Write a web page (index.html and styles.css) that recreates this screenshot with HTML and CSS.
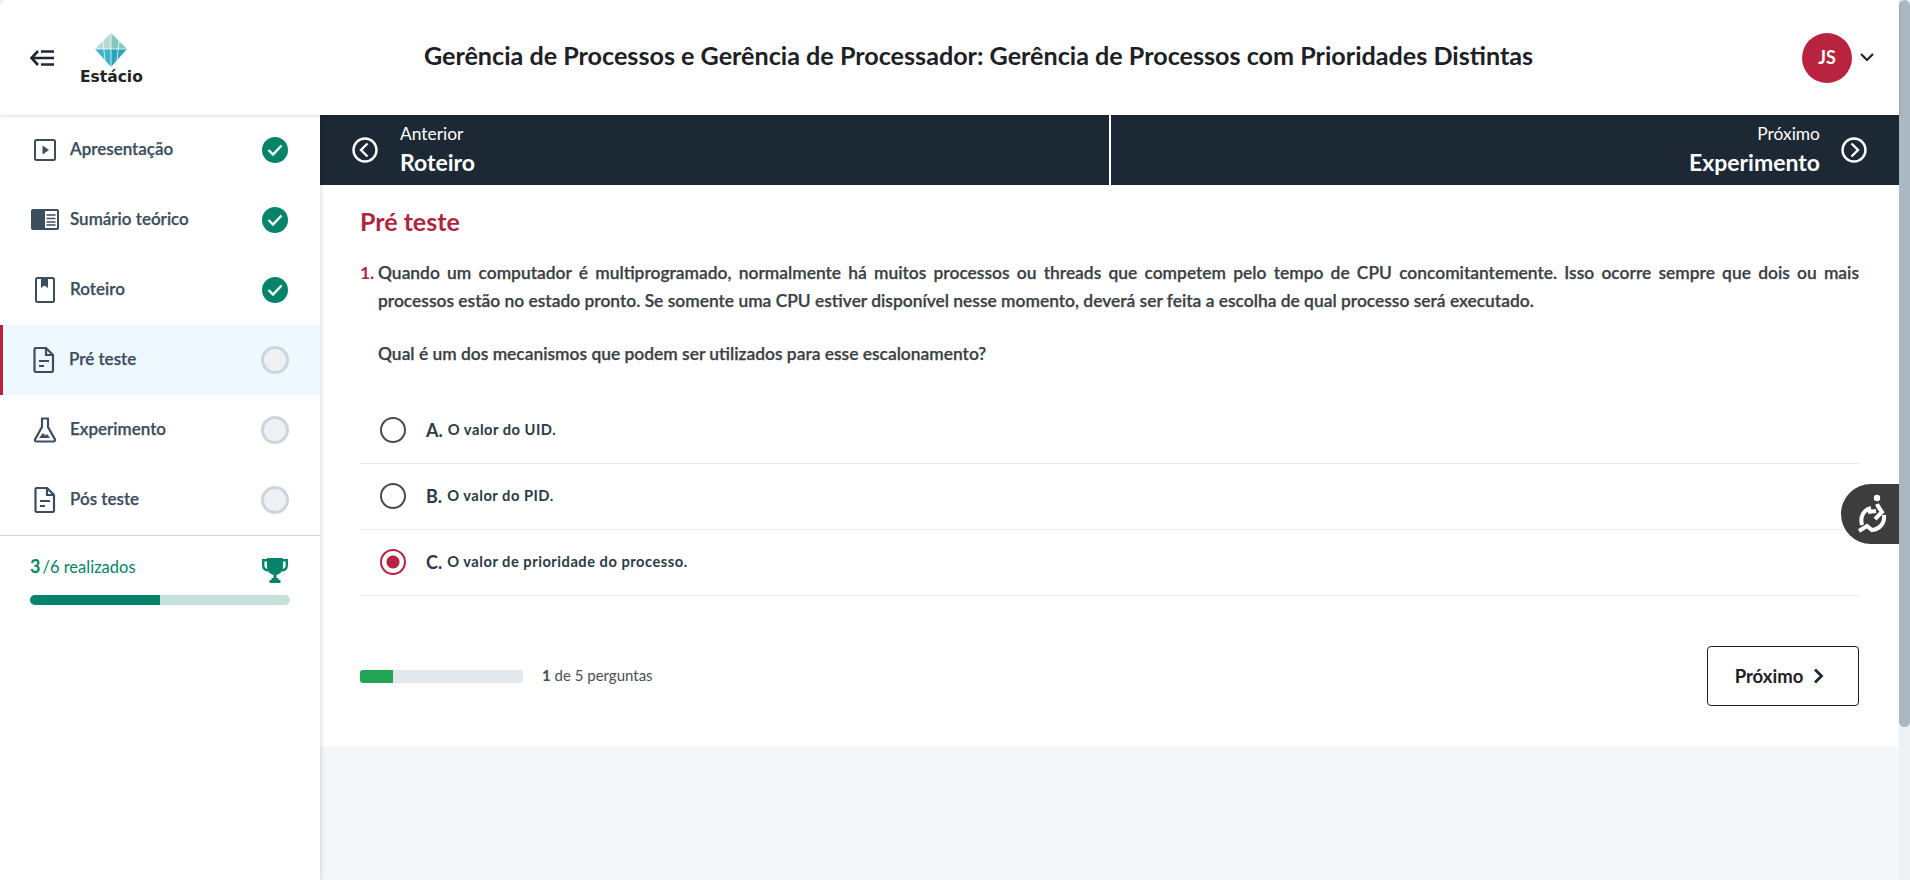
FILE: index.html
```html
<!DOCTYPE html>
<html lang="pt-BR">

<head>
    <meta charset="UTF-8">
    <meta name="viewport" content="width=device-width, initial-scale=1.0">
    <title>Pré teste</title>
    <link rel="stylesheet" href="styles.css">
</head>

<body>
    <div class="app">
        <div class="page">
            <header class="header">
                <div class="header-left">
                    <svg class="menu-back" width="26" height="18" viewBox="0 0 26 18" fill="none" stroke="#1c2833" stroke-width="2.600">
                        <path d="M9 2 2.500 9 9 16M3 9h22M12 2.500h13M12 15.500h13" />
                    </svg>
                    <div class="logo">
                        <svg width="36" height="36" viewBox="0 0 36 36">
                            <path d="M18 1v16H2z" fill="#b5dcd2" />
                            <path d="M18 1v16h16z" fill="#82c7ba" />
                            <path d="M2 17h16v18z" fill="#3ab4ca" />
                            <path d="M34 17H18v18z" fill="#2ba3bb" />
                            <path d="M18 1v34M2 17h32M10 9l2 20M26 9l-2 20" stroke="#fff" stroke-width="1" fill="none" opacity=".75" />
                        </svg>
                        <span class="logo-name">Estácio</span>
                    </div>
                </div>
                <h1 class="course-title">Gerência de Processos e Gerência de Processador: Gerência de Processos com Prioridades Distintas</h1>
                <div class="user">
                    <span class="avatar">JS</span>
                    <svg width="14" height="9" viewBox="0 0 14 9" fill="none" stroke="#1c2833" stroke-width="2.200">
                        <path d="M1 1l6 6 6-6" />
                    </svg>
                </div>
            </header>

            <div class="body-row">
                <aside class="sidebar">
                    <ul class="steps">
                        <li class="step">
                            <svg class="step-icon" width="24" height="24" viewBox="0 0 24 24" fill="none" stroke="#3c4d5c" stroke-width="2">
                                <rect x="2" y="2" width="20" height="20" rx="1.500" />
                                <path d="M9.500 7.500v9l6.500-4.500z" fill="#3c4d5c" stroke="none" />
                            </svg>
                            <span class="step-name">Apresentação</span>
                            <span class="status done"><svg width="16" height="12" viewBox="0 0 16 12" fill="none" stroke="#fff" stroke-width="2.400"><path d="M1.500 6l4.500 4.500 8.500-9" /></svg></span>
                        </li>
                        <li class="step">
                            <svg class="step-icon wide" width="28" height="22" viewBox="0 0 28 22">
                                <rect x="0" y="0" width="28" height="21" rx="2" fill="#3c4d5c" />
                                <rect x="14" y="2" width="12" height="17" fill="#fff" />
                                <path d="M15.500 6h9M15.500 9.500h9M15.500 13h9M15.500 16h9" stroke="#3c4d5c" stroke-width="1.300" />
                            </svg>
                            <span class="step-name">Sumário teórico</span>
                            <span class="status done"><svg width="16" height="12" viewBox="0 0 16 12" fill="none" stroke="#fff" stroke-width="2.400"><path d="M1.500 6l4.500 4.500 8.500-9" /></svg></span>
                        </li>
                        <li class="step">
                            <svg class="step-icon" width="24" height="26" viewBox="0 0 24 26" fill="none" stroke="#3c4d5c" stroke-width="2">
                                <rect x="3" y="1" width="18" height="24" rx="1.500" />
                                <path d="M8 1h7v10l-3.500-2.500L8 11z" fill="#3c4d5c" stroke="none" />
                            </svg>
                            <span class="step-name">Roteiro</span>
                            <span class="status done"><svg width="16" height="12" viewBox="0 0 16 12" fill="none" stroke="#fff" stroke-width="2.400"><path d="M1.500 6l4.500 4.500 8.500-9" /></svg></span>
                        </li>
                        <li class="step active">
                            <svg class="step-icon" width="24" height="26" viewBox="0 0 24 26" fill="none" stroke="#3c4d5c" stroke-width="2.200">
                                <path d="M4 1h10l7 7v15.500a1.500 1.500 0 0 1-1.500 1.500h-15.500a1.500 1.500 0 0 1-1.500-1.500v-21a1.500 1.500 0 0 1 1.500-1.500z" />
                                <path d="M14 1v7h7M7 14h10M7 19h5" />
                            </svg>
                            <span class="step-name">Pré teste</span>
                            <span class="status"></span>
                        </li>
                        <li class="step">
                            <svg class="step-icon" width="24" height="26" viewBox="0 0 24 26" fill="none" stroke="#3c4d5c" stroke-width="2.200">
                                <path d="M8 1.500h8M9 2v8L2 22.500a1.500 1.500 0 0 0 1.500 2h17a1.500 1.500 0 0 0 1.500-2L15 10V2" />
                                <path d="M6 21l4-5 2.500 2.500 1.500-1.500 3 4z" fill="#3c4d5c" stroke="none" />
                            </svg>
                            <span class="step-name">Experimento</span>
                            <span class="status"></span>
                        </li>
                        <li class="step">
                            <svg class="step-icon" width="24" height="26" viewBox="0 0 24 26" fill="none" stroke="#3c4d5c" stroke-width="2.200">
                                <path d="M4 1h10l7 7v15.500a1.500 1.500 0 0 1-1.500 1.500h-15.500a1.500 1.500 0 0 1-1.500-1.500v-21a1.500 1.500 0 0 1 1.500-1.500z" />
                                <path d="M14 1v7h7M7 14h10M7 19h5" />
                            </svg>
                            <span class="step-name">Pós teste</span>
                            <span class="status"></span>
                        </li>
                    </ul>
                    <div class="done-count">
                        <div class="done-row">
                            <span class="done-text"><b>3</b>/6 realizados</span>
                            <svg class="trophy" width="26" height="25" viewBox="0 0 26 25">
                                <path d="M5 0h16v9a8 8 0 0 1-16 0z" fill="#05846a" />
                                <path d="M5 2.200H1.200v5.300c0 3 2 4.500 5 5M21 2.200h3.800v5.300c0 3-2 4.500-5 5" fill="none" stroke="#05846a" stroke-width="2.400" />
                                <path d="M11.500 15h3v6h-3zM7.500 22h11v3h-11zM9.500 20h7v2h-7z" fill="#05846a" />
                            </svg>
                        </div>
                        <div class="done-bar"><div class="done-fill" style="width: 50%"></div></div>
                    </div>
                </aside>

                <div class="content">
                    <nav class="pager">
                        <div class="pager-side prev">
                            <svg width="26" height="26" viewBox="0 0 26 26" fill="none" stroke="#fff" stroke-width="2.400">
                                <circle cx="13" cy="13" r="11.500" />
                                <path d="M15.500 6.500 9 13l6.500 6.500" />
                            </svg>
                            <div class="pager-text">
                                <span class="pager-label">Anterior</span>
                                <span class="pager-name">Roteiro</span>
                            </div>
                        </div>
                        <div class="pager-side next">
                            <div class="pager-text">
                                <span class="pager-label">Próximo</span>
                                <span class="pager-name">Experimento</span>
                            </div>
                            <svg width="26" height="26" viewBox="0 0 26 26" fill="none" stroke="#fff" stroke-width="2.400">
                                <circle cx="13" cy="13" r="11.500" />
                                <path d="M10.500 6.500 17 13l-6.500 6.500" />
                            </svg>
                        </div>
                    </nav>

                    <main class="quiz">
                        <h2 class="quiz-title">Pré teste</h2>
                        <div class="question">
                            <span class="question-num">1.</span>
                            <div class="question-text">
                                <p>Quando um computador é multiprogramado, normalmente há muitos processos ou threads que competem pelo tempo de CPU concomitantemente. Isso ocorre sempre que dois ou mais processos estão no estado pronto. Se somente uma CPU estiver disponível nesse momento, deverá ser feita a escolha de qual processo será executado.</p>
                                <p>Qual é um dos mecanismos que podem ser utilizados para esse escalonamento?</p>
                            </div>
                        </div>
                        <ul class="options">
                            <li class="option">
                                <span class="radio"></span>
                                <span class="option-letter">A.</span>
                                <span class="option-text">O valor do UID.</span>
                            </li>
                            <li class="option">
                                <span class="radio"></span>
                                <span class="option-letter">B.</span>
                                <span class="option-text">O valor do PID.</span>
                            </li>
                            <li class="option">
                                <span class="radio checked"></span>
                                <span class="option-letter">C.</span>
                                <span class="option-text">O valor de prioridade do processo.</span>
                            </li>
                        </ul>
                        <div class="quiz-foot">
                            <div class="quiz-bar"><div class="quiz-fill" style="width: 20%"></div></div>
                            <span class="quiz-count"><b>1</b> de 5 perguntas</span>
                            <button class="next-btn" type="button">
                                Próximo
                                <svg width="11" height="16" viewBox="0 0 11 16" fill="none" stroke="#1c2833" stroke-width="2.800">
                                    <path d="M2 1.500 8.500 8 2 14.500" />
                                </svg>
                            </button>
                        </div>
                    </main>
                </div>
            </div>

            <div class="a11y">
                <svg width="60" height="60" viewBox="0 0 60 60" fill="none" stroke="#fff" stroke-width="4">
                    <circle cx="37" cy="14" r="3.200" fill="#fff" stroke="none" />
                    <path d="M37 20c1 3 3 5 5 8l-7 7" />
                    <path d="M31 24c-8 2-11 9-9 17" />
                    <path d="M28 28l8-1" />
                    <path d="M44 31c1 8-4 14-12 15" />
                    <path d="M19 47l8-5 6 5" />
                </svg>
            </div>
        </div>
        <div class="scrollbar"><div class="scroll-thumb"></div></div>
    </div>
</body>

</html>
```

FILE: styles.css
```css
* {
    margin: 0;
    padding: 0;
    box-sizing: border-box;
}

html,
body {
    height: 100%;
    overflow: hidden;
}

body {
    font-family: "Lato", "Liberation Sans", sans-serif;
    color: #2f3b46;
    background: #f4f6f8;
}

ul {
    list-style: none;
}

.app {
    display: flex;
    height: 880px;
}

.page {
    flex: 1;
    display: flex;
    flex-direction: column;
    position: relative;
    min-width: 0;
}

.scrollbar {
    width: 11px;
    background: #eef1f4;
}

.scroll-thumb {
    height: 727px;
    background: #a9b8c3;
    border-radius: 6px;
}

/* header */
.header {
    height: 115px;
    display: flex;
    align-items: center;
    background: #fff;
    box-shadow: 0 1px 4px rgba(0, 0, 0, 0.14);
    position: relative;
    z-index: 3;
    border-top-left-radius: 6px;
}

.header-left {
    width: 320px;
    flex: none;
    display: flex;
    align-items: center;
    padding-left: 29px;
    gap: 25px;
}

.logo {
    display: flex;
    flex-direction: column;
    align-items: center;
    margin-top: 2px;
}

.logo-name {
    font-family: "DejaVu Sans", sans-serif;
    font-size: 15.500px;
    font-weight: 700;
    line-height: 17px;
    color: #222;
    margin-top: 1px;
}

.course-title {
    flex: 1;
    text-align: center;
    font-size: 25.150px;
    font-weight: 700;
    color: #1d2125;
    margin-top: -6px;
    padding-right: 164px;
}

.user {
    width: 98px;
    flex: none;
    display: flex;
    align-items: center;
    gap: 8px;
    padding-left: 1px;
}

.avatar {
    width: 50px;
    height: 50px;
    border-radius: 50%;
    background: #b92340;
    color: #fff;
    font-weight: 700;
    font-size: 18px;
    padding-bottom: 2px;
    display: flex;
    align-items: center;
    justify-content: center;
}

/* sidebar */
.body-row {
    flex: 1;
    display: flex;
    min-height: 0;
}

.sidebar {
    width: 320px;
    flex: none;
    background: #fff;
    box-shadow: 1px 0 5px rgba(0, 0, 0, 0.14);
    position: relative;
    z-index: 2;
}

.step {
    height: 70px;
    display: flex;
    align-items: center;
    position: relative;
    padding-right: 31px;
}

.step.active {
    background: #eef9ff;
    border-left: 3px solid #b92340;
}

.step-icon {
    position: absolute;
    left: 33px;
    top: 50%;
    transform: translateY(-50%);
}

.step-icon.wide {
    left: 31px;
}

.step.active .step-icon {
    left: 29px;
}

.step-name {
    flex: 1;
    padding-left: 70px;
    font-size: 17px;
    font-weight: 600;
    color: #3c4d5c;
    -webkit-text-stroke: 0.25px #3c4d5c;
    margin-top: -3px;
}

.step.active .step-name {
    padding-left: 66px;
}

.status {
    width: 28px;
    height: 28px;
    border-radius: 50%;
    background: #eef1f4;
    border: 3px solid #cdd5dc;
    display: flex;
    align-items: center;
    justify-content: center;
}

.status.done {
    width: 26px;
    height: 26px;
    margin: -1px 1px 0;
    background: #05846a;
    border: 0;
}

.done-count {
    border-top: 1px solid #cfd6dc;
    padding: 21px 30px 0;
}

.done-row {
    display: flex;
    align-items: center;
    justify-content: space-between;
    height: 26px;
}

.done-text {
    font-size: 16.500px;
    color: #05846a;
    margin-top: -8px;
}

.done-text b {
    font-size: 18px;
    margin-right: 2px;
}

.trophy {
    margin-right: 2px;
}

.done-bar {
    height: 10px;
    margin-top: 12px;
    background: #c5e2da;
    border-radius: 5px;
    overflow: hidden;
}

.done-fill {
    height: 100%;
    background: #05846a;
}

/* pager */
.content {
    flex: 1;
    min-width: 0;
    display: flex;
    flex-direction: column;
}

.pager {
    height: 70px;
    background: #1c2833;
    color: #fff;
    display: flex;
}

.pager-side {
    display: flex;
    align-items: center;
    gap: 22px;
    padding: 0 32px;
}

.pager-side.prev {
    width: 789px;
    flex: none;
}

.pager-side.next {
    flex: 1;
    justify-content: flex-end;
    border-left: 2px solid #fff;
    gap: 21px;
    padding-right: 32px;
}

.pager-side.next .pager-text {
    text-align: right;
}

.pager-text {
    display: flex;
    flex-direction: column;
}

.pager-label {
    font-size: 17.400px;
    line-height: 22px;
}

.pager-name {
    font-size: 23px;
    font-weight: 700;
    line-height: 30px;
    margin-top: 2px;
}

/* quiz */
.quiz {
    background: #fff;
    padding: 21px 40px 40px;
    height: 561px;
}

.quiz-title {
    font-size: 25px;
    font-weight: 700;
    color: #ae2540;
    line-height: 30px;
}

.question {
    display: flex;
    margin-top: 23px;
    font-size: 17.400px;
    font-weight: 600;
    line-height: 28px;
    color: #3a3f44;
    -webkit-text-stroke: 0.25px #3a3f44;
}

.question-num {
    width: 18px;
    color: #ae2540;
    -webkit-text-stroke: 0;
    font-weight: 700;
    flex: none;
}

.question-text {
    flex: 1;
    text-align: justify;
}

.question-text p+p {
    margin-top: 25px;
}

.options {
    margin-top: 30px;
}

.option {
    height: 66px;
    display: flex;
    align-items: center;
    border-bottom: 1px solid #e5e8eb;
    padding: 0 0 1px 20px;
}

.radio {
    width: 26px;
    height: 26px;
    border-radius: 50%;
    border: 2px solid #4a4a4a;
    flex: none;
    margin-right: 20px;
}

.radio.checked {
    border-color: #b92340;
    background: radial-gradient(circle, #b92340 0 6px, #fff 7px);
}

.option-letter {
    font-size: 18px;
    font-weight: 700;
    color: #2c3a47;
    margin-right: 5px;
}

.option-text {
    font-size: 14.700px;
    font-weight: 700;
    color: #2c3a47;
    letter-spacing: 0.5px;
    margin-top: -3px;
}

.quiz-foot {
    display: flex;
    align-items: center;
    margin-top: 50px;
}

.quiz-bar {
    width: 163px;
    height: 13px;
    background: #e3e8ec;
    border-radius: 3px;
    overflow: hidden;
}

.quiz-fill {
    height: 100%;
    background: #21a454;
}

.quiz-count {
    margin-left: 19px;
    font-size: 15px;
    color: #4a4f54;
    margin-top: -3px;
}

.next-btn {
    margin-left: auto;
    width: 152px;
    height: 60px;
    background: #fff;
    border: 1px solid #1d2125;
    border-radius: 4px;
    padding-right: 7px;
    font-family: inherit;
    font-size: 18.500px;
    font-weight: 700;
    color: #1d2125;
    display: flex;
    align-items: center;
    justify-content: center;
    gap: 10px;
}

/* floating accessibility button */
.a11y {
    position: absolute;
    right: 0;
    top: 484px;
    width: 58px;
    height: 60px;
    background: #3d3d3d;
    border-radius: 30px 0 0 30px;
    display: flex;
    align-items: center;
    justify-content: flex-end;
    z-index: 4;
    overflow: hidden;
}

.a11y svg {
    flex: none;
    margin-right: -1px;
}
```
